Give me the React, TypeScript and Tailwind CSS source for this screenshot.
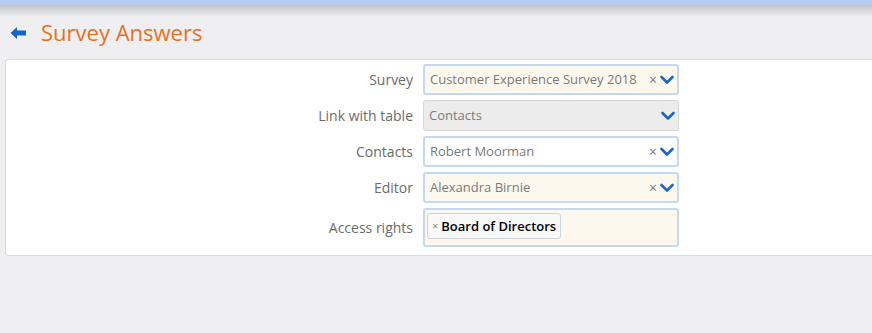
import React from "react";

const font = { fontFamily: '"Open Sans", "Noto Sans", sans-serif' };

function Chevron() {
  return (
    <svg width="14" height="10" viewBox="0 0 14 10" className="shrink-0">
      <path d="M1.5 2 L7 7.5 L12.5 2" fill="none" stroke="#1a66c8" strokeWidth="2.6" strokeLinecap="round" strokeLinejoin="round" />
    </svg>
  );
}

function Select({ value, bg, clear = true, disabled = false }: { value: string; bg: string; clear?: boolean; disabled?: boolean }) {
  return (
    <div
      className={`flex items-center h-[31px] w-[256px] rounded-[3px] pl-[5px] pr-[3px] ${disabled ? "border border-[#d6d6d6]" : "border-2 border-[#c3d9ef]"} ${bg}`}
    >
      <span className="flex-1 text-[13px] text-[#7a7a7a] whitespace-nowrap leading-[18px] pb-[2px]">{value}</span>
      {clear && <span className="text-[14px] text-[#777] mr-[3px] leading-[18px]">×</span>}
      <Chevron />
    </div>
  );
}

function Row({ label, children }: { label: string; children: React.ReactNode }) {
  return (
    <div className="flex items-center">
      <div className="w-[416px] text-right pr-[10px] text-[14px] text-[#6b6b6b]">{label}</div>
      {children}
    </div>
  );
}

export default function App() {
  return (
    <div className="w-[872px] h-[333px] bg-[#efeff1] overflow-hidden" style={font}>
      <div className="h-[5px] bg-[#b7cdef]" />
      <div className="h-[12px] bg-gradient-to-b from-[#c4c4c6] to-[#efeff1]" />
      <div className="flex items-center h-[32px] pl-[10px]">
        <svg width="17" height="14" viewBox="0 0 17 14" className="mr-[14px]">
          <path d="M0.5 7 L7 1 L7 4.5 L16 4.5 L16 9.5 L7 9.5 L7 13 Z" fill="#1565c8" />
        </svg>
        <span className="text-[22px] text-[#ea711c] leading-none pb-[2px]">Survey Answers</span>
      </div>
      <div className="mt-[10px] ml-[5px] h-[197px] bg-white border border-r-0 border-[#d3dbe0] rounded-l-[3px] pt-[4px]">
        <div className="flex flex-col gap-[5px] ml-[1px]">
          <Row label="Survey">
            <Select value="Customer Experience Survey 2018" bg="bg-[#fdf8ee]" />
          </Row>
          <Row label="Link with table">
            <Select value="Contacts" bg="bg-[#ececec]" clear={false} disabled />
          </Row>
          <Row label="Contacts">
            <Select value="Robert Moorman" bg="bg-white" />
          </Row>
          <Row label="Editor">
            <Select value="Alexandra Birnie" bg="bg-[#fdf8ee]" />
          </Row>
          <Row label="Access rights">
            <div className="h-[39px] w-[256px] rounded-[3px] border-2 border-[#c3d9ef] bg-[#fdf8ee] pt-[2px] pl-[2px]">
              <span className="inline-flex items-center h-[26px] px-[4px] border border-[#cfd4d9] rounded-[3px] bg-[#f8f8f8]">
                <span className="text-[11px] text-[#888] mr-[3px] leading-none">×</span>
                <span className="text-[13px] font-semibold text-black leading-[18px]">Board of Directors</span>
              </span>
            </div>
          </Row>
        </div>
      </div>
    </div>
  );
}
